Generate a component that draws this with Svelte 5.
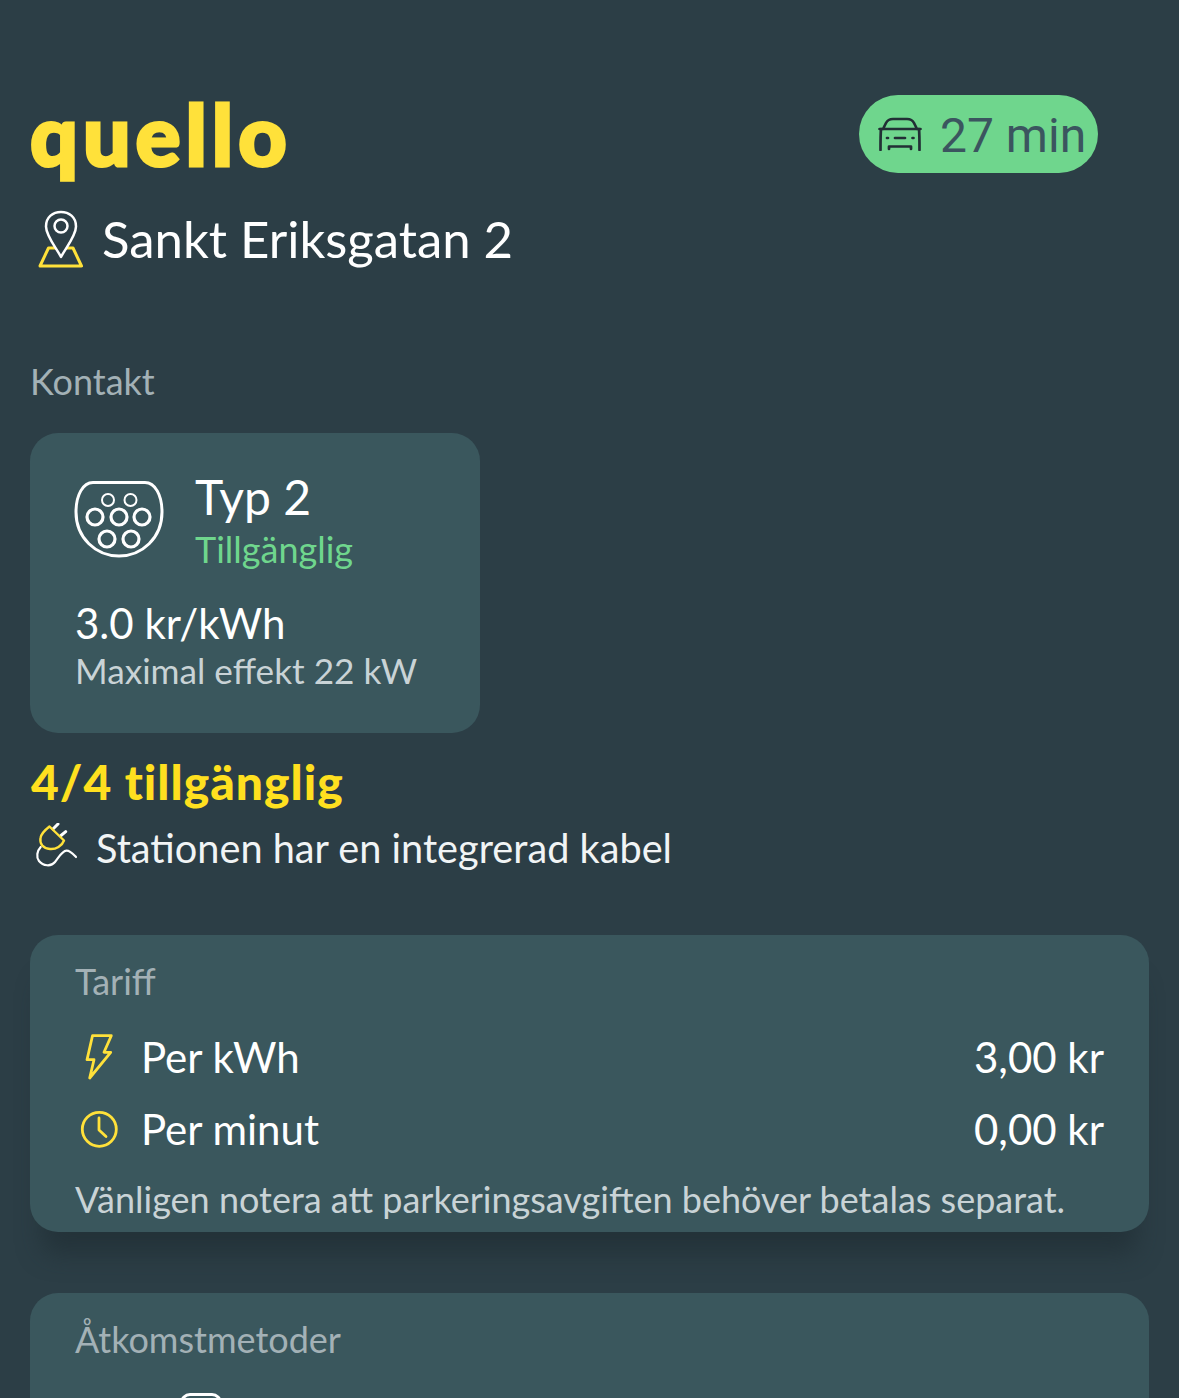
<script>
  const tariffs = [
    { id: 'kwh', label: 'Per kWh', price: '3,00 kr' },
    { id: 'min', label: 'Per minut', price: '0,00 kr' }
  ];
</script>

<div class="page">
  <header class="top">
    <div class="logo">quello</div>
    <div class="eta">
      <svg width="44" height="34" viewBox="878 116 44 34" fill="none" stroke="#222f35" stroke-width="2.700" stroke-linecap="round" stroke-linejoin="round">
        <path d="M879.500 128H920.500M883 128L886 122C887.500 119 890 118 893 118H907C910 118 912.500 119 914 122L917 128" />
        <path d="M881 128C880.500 133 880.500 142 880.500 149M919 128C919.500 133 919.500 142 919.500 149" />
        <path d="M887 137H888M912.500 137H913.500M895 137H905M889 148V145.500H911V148" />
      </svg>
      <span>27 min</span>
    </div>
  </header>

  <div class="address">
    <svg width="48" height="60" viewBox="36 208 48 60" fill="none" stroke-width="2.500" stroke-linejoin="round">
      <path d="M48.500 248H73L81.500 266H40Z" stroke="#ffe13a" stroke-width="3" />
      <path d="M61 257C57 249 46 236 46 226.500C46 217 53 212 61 212C69 212 76 217 76 226.500C76 236 65 249 61 257Z" stroke="#fff" fill="#2c3e46" />
      <circle cx="61" cy="226" r="6.500" stroke="#fff" />
    </svg>
    <span>Sankt Eriksgatan 2</span>
  </div>

  <div class="section-label">Kontakt</div>

  <section class="connector">
    <div class="connector-head">
      <svg class="plug-face" width="90" height="80" viewBox="74 480 90 80" fill="none" stroke="#fff">
        <path stroke-width="3" d="M93 482.500H145C155 482.500 162 495 162 512C162 538 142 556 119 556C96 556 76 538 76 512C76 495 83 482.500 93 482.500Z" />
        <g stroke-width="2">
          <circle cx="108" cy="500" r="6" />
          <circle cx="130.500" cy="500" r="6" />
        </g>
        <g stroke-width="3.200">
          <circle cx="95" cy="517" r="8" />
          <circle cx="119" cy="517" r="8" />
          <circle cx="142" cy="517" r="8" />
          <circle cx="107" cy="539" r="8" />
          <circle cx="131" cy="539" r="8" />
        </g>
      </svg>
      <div>
        <div class="connector-name">Typ 2</div>
        <div class="connector-status">Tillgänglig</div>
      </div>
    </div>
    <div class="connector-price">3.0 kr/kWh</div>
    <div class="connector-power">Maximal effekt 22 kW</div>
  </section>

  <div class="avail">4/4 tillgänglig</div>
  <div class="cable">
    <svg width="44" height="48" viewBox="35 824 44 48" fill="none" stroke-linecap="round" stroke-linejoin="round">
      <path d="M53 830L58 825M61 836.500L65.700 832.700" stroke="#fff" stroke-width="3" />
      <path d="M40.700 848C37 852 36 858 39 862C43 867 51 868 55 863C59 858 62 852 66.500 851.700C70 851.500 73 855 76 858" stroke="#fff" stroke-width="2.200" />
      <path d="M49.500 827.500L64 841.500C62 847 56 850.500 50 850C43 849.500 39.500 845 40.500 839C41 835 45 831 49.500 827.500Z" stroke="#ffe13a" stroke-width="2.400" />
    </svg>
    <span>Stationen har en integrerad kabel</span>
  </div>

  <section class="card tariff">
    <div class="card-title">Tariff</div>
    <div class="tariff-rows">
      {#each tariffs as t (t.id)}
        <div class="tariff-row">
          <div class="tariff-icon">
            {#if t.id === 'kwh'}
              <svg width="28" height="46" viewBox="86 1035 28 46" fill="none" stroke="#ffe13a" stroke-width="2.800" stroke-linejoin="round" stroke-linecap="round">
                <path d="M93.500 1036.700H112.300L105 1053.300H111.700L90.700 1079L95 1060.700H88Z" />
              </svg>
            {:else}
              <svg width="38" height="38" viewBox="79 1109 38 38" fill="none" stroke="#ffe13a" stroke-width="2.800" stroke-linecap="round" stroke-linejoin="round">
                <circle cx="98.300" cy="1128.300" r="17" />
                <path d="M98 1117V1129L105 1135.500" />
              </svg>
            {/if}
          </div>
          <span class="tariff-label">{t.label}</span>
          <span class="tariff-price">{t.price}</span>
        </div>
      {/each}
    </div>
    <p class="note">Vänligen notera att parkeringsavgiften behöver betalas separat.</p>
  </section>

  <section class="card access">
    <div class="card-title">Åtkomstmetoder</div>
    <div class="access-icon"></div>
  </section>
</div>

<style>
  :global(body) {
    margin: 0;
    background: #2c3e46;
  }

  .page {
    height: 1398px;
    overflow: hidden;
    box-sizing: border-box;
    padding: 95px 30px 0;
    background: #2c3e46;
    color: #fff;
    font-family: Lato, sans-serif;
  }

  svg {
    display: block;
    flex: none;
  }

  .top {
    display: flex;
    justify-content: space-between;
    align-items: flex-start;
    height: 78px;
    padding-right: 51px;
  }

  .logo {
    margin-top: -3px;
    color: #ffe13a;
    font-size: 84px;
    font-weight: 900;
    line-height: 84px;
    letter-spacing: 5px;
    -webkit-text-stroke: 3px #ffe13a;
  }

  .eta {
    display: flex;
    align-items: center;
    gap: 18px;
    width: 239px;
    height: 78px;
    box-sizing: border-box;
    padding: 2px 0 0 19px;
    border-radius: 39px;
    background: #6fd68d;
    color: #3b555f;
    font-family: Roboto, sans-serif;
    font-size: 48px;
  }

  .eta svg {
    margin-top: -2px;
  }

  .address {
    display: flex;
    align-items: center;
    gap: 18px;
    margin-top: 35px;
    padding-left: 6px;
    height: 60px;
    font-size: 50.900px;
  }

  .section-label {
    margin-top: 90px;
    color: #a3b1b6;
    font-size: 36px;
    line-height: 46px;
  }

  .connector {
    box-sizing: border-box;
    width: 450px;
    height: 300px;
    margin-top: 29px;
    padding: 34px 45px 0;
    border-radius: 28px;
    background: #3a575d;
  }

  .connector-head {
    display: flex;
    align-items: center;
    gap: 31px;
    margin-left: -1px;
  }

  .plug-face {
    margin-top: 2px;
  }

  .connector-name {
    font-size: 48px;
    line-height: 60px;
  }

  .connector-status {
    color: #6fd68d;
    font-size: 36px;
    line-height: 44px;
  }

  .connector-price {
    margin-top: 27px;
    font-size: 42px;
    line-height: 50px;
  }

  .connector-power {
    color: #c9d3d6;
    font-size: 35.200px;
    line-height: 44px;
  }

  .avail {
    margin-top: 21px;
    padding-left: 1px;
    color: #ffe01f;
    font-size: 48px;
    font-weight: 900;
    line-height: 56px;
    letter-spacing: 1px;
  }

  .cable {
    display: flex;
    align-items: center;
    gap: 17px;
    margin-top: 12px;
    padding-left: 5px;
    font-size: 39.700px;
    height: 50px;
    color: #f1f4f5;
  }

  .card {
    box-sizing: border-box;
    border-radius: 28px;
    background: #3a575d;
    padding: 23px 45px 0;
  }

  .tariff {
    height: 297px;
    margin-top: 63px;
    box-shadow: 0 34px 24px -12px rgba(30, 42, 48, 0.55);
  }

  .card-title {
    color: #a3b1b6;
    font-size: 36px;
    line-height: 46px;
  }

  .tariff-rows {
    margin-top: 17px;
  }

  .tariff-row {
    display: flex;
    align-items: center;
    height: 72px;
    font-size: 42px;
  }

  .tariff-icon {
    width: 66px;
    display: flex;
    justify-content: center;
    box-sizing: border-box;
    padding-right: 19px;
  }

  .tariff-price {
    margin-left: auto;
  }

  .note {
    margin: 12px 0 0;
    color: #c9d3d6;
    font-size: 36px;
    line-height: 44px;
  }

  .access {
    height: 200px;
    margin-top: 61px;
  }

  .access-icon {
    width: 42px;
    height: 40px;
    margin: 31px 0 0 105px;
    box-sizing: border-box;
    border: 3px solid #fff;
    border-radius: 10px;
  }
</style>
